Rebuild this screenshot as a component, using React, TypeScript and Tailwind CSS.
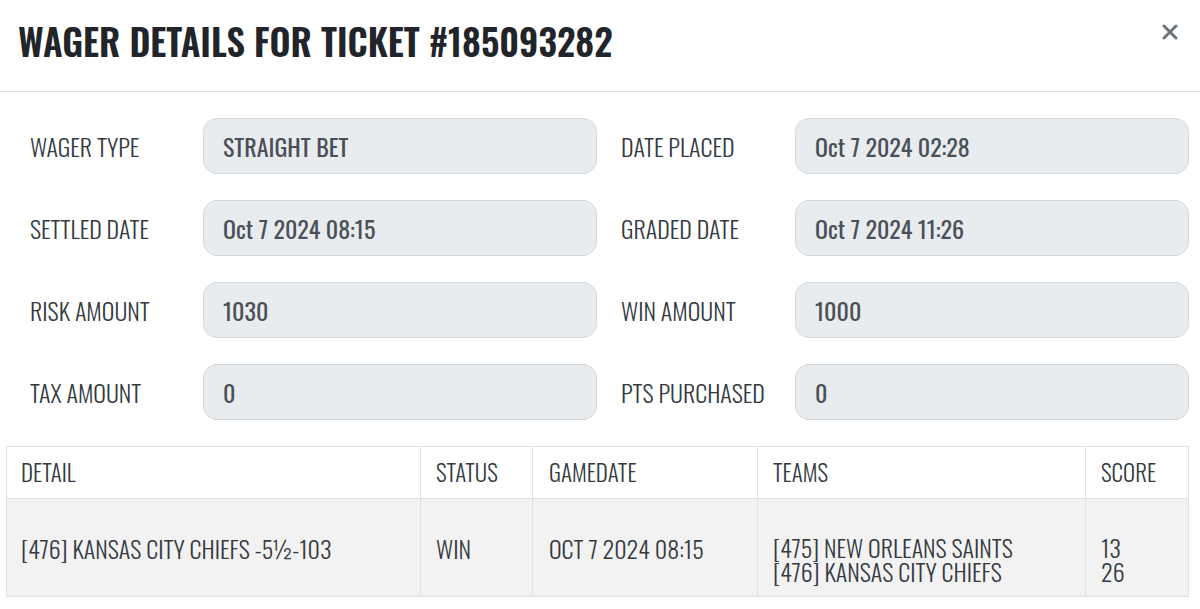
import React from 'react'

const fields: [string, string, string, string][] = [
  ['WAGER TYPE', 'STRAIGHT BET', 'DATE PLACED', 'Oct 7 2024 02:28'],
  ['SETTLED DATE', 'Oct 7 2024 08:15', 'GRADED DATE', 'Oct 7 2024 11:26'],
  ['RISK AMOUNT', '1030', 'WIN AMOUNT', '1000'],
  ['TAX AMOUNT', '0', 'PTS PURCHASED', '0'],
]

function Field({ label, value, first }: { label: string; value: string; first?: boolean }) {
  return (
    <div className={first ? 'flex items-center' : 'flex items-center ml-[24px]'}>
      <div className={first ? 'w-[173px] text-[24px] font-light text-[#343a40]' : 'w-[174px] text-[24px] font-light text-[#343a40]'}>
        {label}
      </div>
      <div className="w-[394px] h-[56px] flex items-center px-[19px] rounded-[14px] border border-[#d3d8dd] bg-[#e9ecef] text-[24px] text-[#495057]">
        {value}
      </div>
    </div>
  )
}

export default function App() {
  return (
    <div className="w-[1200px] h-[609px] bg-white overflow-hidden font-['Oswald',sans-serif]">
      {/* header */}
      <div className="h-[92px] flex items-center justify-between pl-[18px] pr-[22px] border-b border-[#dee2e6]">
        <h1 className="text-[36.5px] font-semibold text-[#212529] -mt-[8px]">
          WAGER DETAILS FOR TICKET #185093282
        </h1>
        <button className="-mt-[28px] text-[#6c757d]">
          <svg width="16" height="16" viewBox="0 0 16 16">
            <path d="M2 2 L14 14 M14 2 L2 14" stroke="currentColor" strokeWidth="3" strokeLinecap="round" />
          </svg>
        </button>
      </div>

      <div className="pt-[26px] pl-[6px] pr-[11px]">
        <div className="flex flex-col gap-[26px] pl-[24px]">
          {fields.map(([l1, v1, l2, v2]) => (
            <div key={l1} className="flex">
              <Field label={l1} value={v1} first />
              <Field label={l2} value={v2} />
            </div>
          ))}
        </div>

        <table className="mt-[26px] w-[1183px] border-collapse border border-[#dee2e6] font-light text-[#343a40]">
          <thead>
            <tr className="h-[52px] bg-white text-[23px]">
              <th className="w-[414px] border border-[#dee2e6] px-[14px] text-left font-light">DETAIL</th>
              <th className="w-[112px] border border-[#dee2e6] px-[15px] text-left font-light">STATUS</th>
              <th className="w-[225px] border border-[#dee2e6] px-[16px] text-left font-light">GAMEDATE</th>
              <th className="w-[328px] border border-[#dee2e6] px-[15px] text-left font-light">TEAMS</th>
              <th className="border border-[#dee2e6] px-[15px] text-left font-light">SCORE</th>
            </tr>
          </thead>
          <tbody>
            <tr className="h-[98px] bg-[#f2f2f2] text-[24px]">
              <td className="border border-[#dee2e6] px-[14px] align-middle">[476] KANSAS CITY CHIEFS -5½-103</td>
              <td className="border border-[#dee2e6] px-[15px] align-middle">WIN</td>
              <td className="border border-[#dee2e6] px-[16px] align-middle">OCT 7 2024 08:15</td>
              <td className="border border-[#dee2e6] px-[15px] align-middle">
                <div className="pt-[22px] leading-[24px]">
                  [475] NEW ORLEANS SAINTS
                  <br />
                  [476] KANSAS CITY CHIEFS
                </div>
              </td>
              <td className="border border-[#dee2e6] px-[15px] align-middle">
                <div className="pt-[22px] leading-[24px]">
                  13
                  <br />
                  26
                </div>
              </td>
            </tr>
          </tbody>
        </table>
      </div>
    </div>
  )
}
